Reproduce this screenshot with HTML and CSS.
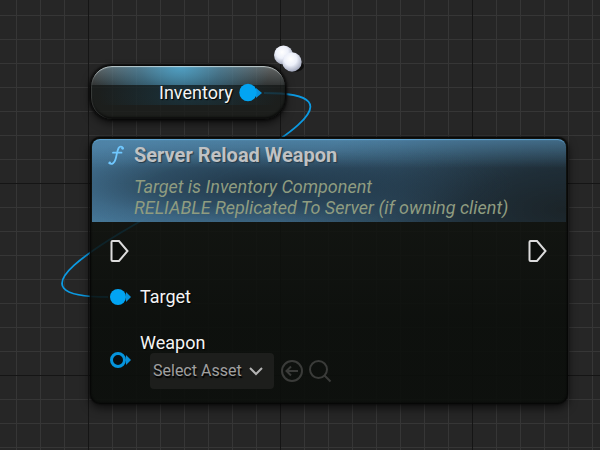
FILE: index.html
```html
<!DOCTYPE html>
<html lang="en">
<head>
<meta charset="utf-8">
<title>Blueprint Graph</title>
<link rel="stylesheet" href="styles.css">
</head>
<body>
<main class="graph">
  <svg class="wires" aria-hidden="true">
    <path d="M264 93C472 93 -99 297 108 297"/>
  </svg>

  <section class="variable">
    <span class="label">Inventory</span>
    <svg class="pin" width="24" height="20" viewBox="0 0 24 20" aria-hidden="true">
      <path class="arrow" d="M17 5l6 5-6 5z"/>
      <circle class="dot" cx="9" cy="9.500" r="8.700"/>
    </svg>
    <svg class="badge" width="34" height="32" viewBox="0 0 34 32" aria-hidden="true">
      <defs>
        <radialGradient id="pearl" cx=".42" cy=".35" r=".65">
          <stop offset="0" stop-color="#fff"/>
          <stop offset=".5" stop-color="#edf0fa"/>
          <stop offset="1" stop-color="#a2a8bc"/>
        </radialGradient>
      </defs>
      <ellipse cx="23" cy="23" rx="10" ry="6" fill="#080808" opacity=".8"/>
      <ellipse cx="14" cy="17" rx="8" ry="5" fill="#080808" opacity=".6"/>
      <circle cx="12.500" cy="12" r="9.500" fill="url(#pearl)"/>
      <circle cx="21" cy="19" r="9.700" fill="url(#pearl)"/>
    </svg>
  </section>

  <section class="node">
    <header class="head">
      <svg class="fn" width="18" height="20" viewBox="0 0 18 20" aria-hidden="true">
        <path d="M15 3.500C14.500 1.200 11.800 .8 10.500 3.200C9.200 5.500 8.800 10 7.600 14C6.600 17.800 4 20 1.300 18.200M5 7.700H13.500"/>
        <circle cx="14.500" cy="3.300" r="1.200"/>
        <circle cx="1.800" cy="17.800" r="1.200"/>
      </svg>
      <div>
        <h1>Server Reload Weapon</h1>
        <p>Target is Inventory Component<br>RELIABLE Replicated To Server (if owning client)</p>
      </div>
    </header>
    <div class="body">
      <div class="row exec">
        <svg width="20" height="24" viewBox="0 0 20 24" aria-hidden="true"><path d="M2.500 2H9L17.500 12L9 22H2.500Q1.500 22 1.500 21V3Q1.500 2 2.500 2Z"/></svg>
        <svg width="20" height="24" viewBox="0 0 20 24" aria-hidden="true"><path d="M2.500 2H9L17.500 12L9 22H2.500Q1.500 22 1.500 21V3Q1.500 2 2.500 2Z"/></svg>
      </div>
      <div class="row target">
        <svg class="pin" width="24" height="20" viewBox="0 0 24 20" aria-hidden="true">
          <path class="arrow" d="M16 5l5 5-5 5z"/>
          <circle class="dot" cx="8" cy="10" r="8"/>
        </svg>
        <span class="label">Target</span>
      </div>
      <div class="row weapon">
        <svg class="pin" width="24" height="20" viewBox="0 0 24 20" aria-hidden="true">
          <path class="arrow" d="M16 4l5 5-5 5z"/>
          <circle class="ring" cx="8" cy="9" r="6.500"/>
        </svg>
        <div>
          <span class="label" id="weapon">Weapon</span>
          <div class="picker">
            <button class="select" type="button" aria-describedby="weapon">Select Asset
              <svg width="16" height="12" viewBox="0 0 16 12" aria-hidden="true"><path d="M2 3l6 6 6-6"/></svg>
            </button>
            <button class="tool" type="button" aria-label="Use selected asset">
              <svg width="24" height="24" viewBox="0 0 24 24" aria-hidden="true"><circle cx="12" cy="12" r="10"/><path d="M18 12H7M11 7.500L6.500 12L11 16.500"/></svg>
            </button>
            <button class="tool" type="button" aria-label="Browse to asset">
              <svg width="24" height="24" viewBox="0 0 24 24" aria-hidden="true"><circle cx="10.500" cy="10.500" r="8.500"/><path d="M16.500 16.500L22.500 22.500"/></svg>
            </button>
          </div>
        </div>
      </div>
    </div>
  </section>
</main>
</body>
</html>
```
FILE: styles.css
```css
* {
  box-sizing: border-box;
}

body {
  margin: 0;
  font-family: Roboto, "Liberation Sans", sans-serif;
  font-size: 18px;
  line-height: 20px;
  color: #f4f4f4;
}

/* Minor lines every 24px, major lines every 192px */
.graph {
  position: relative;
  min-height: 100vh;
  overflow: hidden;
  background-color: #262626;
  background-image:
    linear-gradient(90deg, #151515 1px, transparent 1px),
    linear-gradient(#151515 1px, transparent 1px),
    linear-gradient(90deg, #363636 1px, transparent 1px),
    linear-gradient(#363636 1px, transparent 1px);
  background-size: 192px 192px, 192px 192px, 24px 24px, 24px 24px;
  background-position: 88px 0, 0 183px, 16px 0, 0 15px;
}

.wires {
  position: absolute;
  inset: 0;
  width: 100%;
  height: 100%;
  fill: none;
  stroke: #0c9ae2;
  stroke-width: 1.8;
}

.variable {
  position: absolute;
  left: 90px;
  top: 65px;
  display: flex;
  align-items: center;
  gap: 6px;
  padding: 17px 22px 16px 68px;
  border: 1px solid #080808;
  border-radius: 22px;
  background:
    radial-gradient(ellipse 90px 60px at 46% 0, rgba(75, 175, 220, .8), rgba(60, 150, 195, .45) 45%, rgba(60, 150, 195, 0)) 0 0 / 100% 19px no-repeat,
    radial-gradient(ellipse 90px 40px at 50% 50%, rgba(24, 80, 105, .4), transparent) 0 19px / 100% 20px no-repeat,
    linear-gradient(rgba(125, 130, 130, .7), rgba(55, 60, 60, .7) 19px, rgba(24, 28, 27, .8) 19px, rgba(26, 28, 25, .8));
  box-shadow:
    inset 0 2px 1px -1px rgba(220, 230, 230, .75),
    inset 1px 0 1px rgba(170, 175, 175, .25),
    inset 0 -2px 2px #0b0c0b,
    0 0 2px 1px #0b0b0b,
    0 4px 9px rgba(0, 0, 0, .55);
}

.label {
  text-shadow: 1px 1px 1px #000;
}

.pin {
  flex: none;
}

.arrow {
  fill: #0791dc;
}

.dot {
  fill: #02a4f3;
}

.ring {
  fill: #080d10;
  stroke: #0594dd;
  stroke-width: 3;
}

.badge {
  position: absolute;
  right: -20px;
  top: -23px;
}

.node {
  position: absolute;
  left: 90px;
  top: 137px;
  padding: 2px;
  border-radius: 10px;
  background: linear-gradient(rgba(18, 21, 16, .82), rgba(11, 14, 11, .9) 70%);
  box-shadow:
    inset 0 0 2px 1px #050505,
    0 0 2px #000,
    0 4px 10px rgba(0, 0, 0, .65);
}

.head {
  display: flex;
  gap: 8px;
  padding: 6px 58px 4px 16px;
  border-radius: 8px 8px 0 0;
  background:
    linear-gradient(rgba(86, 142, 180, .6), rgba(86, 142, 180, 0) 35%),
    radial-gradient(ellipse 250px 50px at 36% 55%, rgba(31, 52, 68, .95), rgba(31, 52, 68, .6) 45%, rgba(31, 52, 68, .2) 75%, rgba(31, 52, 68, 0)),
    radial-gradient(ellipse 290px 110px at 100% 85%, rgba(26, 34, 38, .95), rgba(28, 40, 48, .85) 35%, rgba(28, 42, 52, .4) 70%, rgba(28, 42, 52, 0)),
    linear-gradient(90deg, rgba(76, 130, 167, .9), rgba(68, 114, 147, .9) 65%, rgba(52, 84, 105, .85));
  box-shadow: inset 0 2px 1px -1px rgba(100, 175, 225, .8);
}

.fn {
  flex: none;
  fill: #70c8ff;
}

.fn path {
  fill: none;
  stroke: #70c8ff;
  stroke-width: 1.8;
  stroke-linecap: round;
}

h1,
p {
  margin: 0;
}

h1 {
  font-size: 20px;
  font-weight: 700;
  line-height: 20px;
  color: #c0c2c4;
  text-shadow: 1px 1px 1px #263a48;
}

p {
  margin-top: 11px;
  font-size: 18px;
  font-style: italic;
  line-height: 21px;
  color: #8f9c80;
  white-space: nowrap;
}

.body {
  padding: 17px 18px 13px;
}

.row {
  display: flex;
  align-items: center;
  gap: 6px;
}

.exec {
  justify-content: space-between;
}

.exec svg {
  fill: rgba(0, 0, 0, .25);
  stroke: #dcdcdc;
  stroke-width: 2;
}

.target {
  margin-top: 24px;
}

.weapon {
  margin-top: 26px;
}

.picker {
  display: flex;
  align-items: center;
  gap: 4px;
  margin-left: 10px;
}

button {
  padding: 0;
  border: 0;
  background: none;
  font: inherit;
}

button svg {
  display: block;
  fill: none;
  stroke: #3a3b39;
  stroke-width: 2;
}

.select {
  display: flex;
  align-items: center;
  gap: 6px;
  height: 36px;
  margin-right: 2px;
  padding: 0 10px 0 3px;
  border-radius: 4px;
  background: #1d1e1c;
  font-size: 16px;
  color: #a0a0a0;
  text-shadow: 1px 2px 1px #000;
}

.select svg {
  stroke: #b4b4b4;
}
```
